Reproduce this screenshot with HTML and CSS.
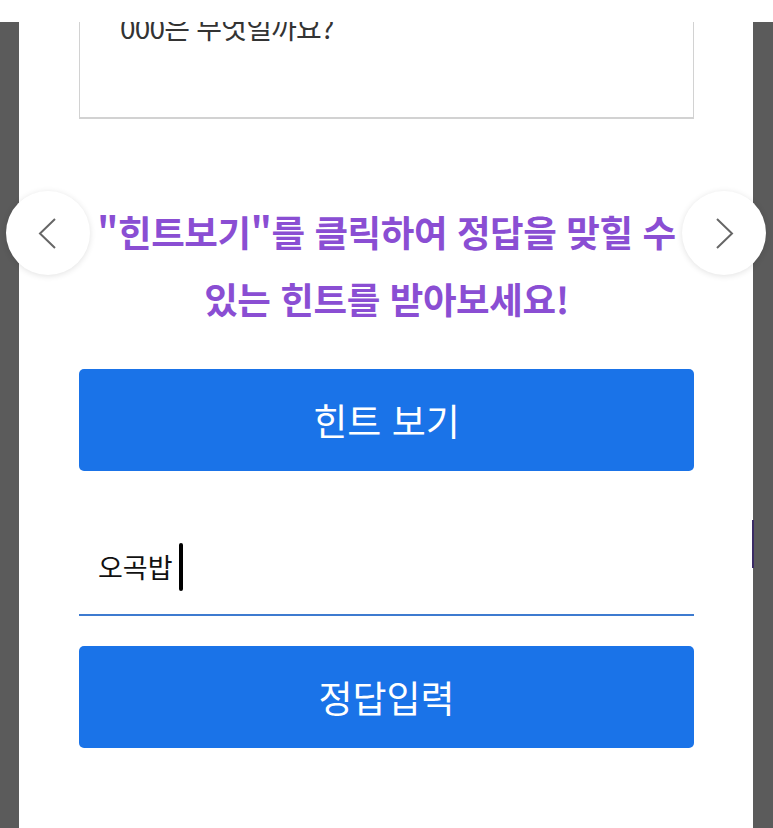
FILE: index.html
```html
<!DOCTYPE html>
<html lang="ko">
<head>
    <meta charset="UTF-8">
    <meta name="viewport" content="width=device-width, initial-scale=1.0">
    <title>퀴즈</title>
    <link rel="stylesheet" href="styles.css">
</head>
<body>
    <div class="top-strip"></div>
    <div class="side-mark"></div>

    <div class="panel">
        <div class="question">000은 무엇일까요?</div>

        <p class="hint-text">"힌트보기"를 클릭하여 정답을 맞힐 수<br>있는 힌트를 받아보세요!</p>

        <button class="blue-btn" id="hintBtn">힌트 보기</button>

        <div class="answer-field">
            <span class="answer-value">오곡밥</span><span class="caret"></span>
        </div>

        <button class="blue-btn" id="submitBtn">정답입력</button>
    </div>

    <button class="nav-arrow prev" aria-label="이전">
        <svg width="84" height="84" viewBox="0 0 84 84"><polyline points="49,28 34,42.5 49,57" /></svg>
    </button>
    <button class="nav-arrow next" aria-label="다음">
        <svg width="84" height="84" viewBox="0 0 84 84"><polyline points="35,28 50,42.5 35,57" /></svg>
    </button>
</body>
</html>
```

FILE: styles.css
```css
body {
    margin: 0;
    background-color: #5b5b5b;
    font-family: "Noto Sans CJK KR", "Noto Sans", sans-serif;
    overflow: hidden;
}
.top-strip {
    position: fixed;
    top: 0;
    left: 0;
    right: 0;
    height: 22px;
    background-color: #fff;
    z-index: 5;
}
.side-mark {
    position: fixed;
    left: 752px;
    top: 520px;
    width: 2px;
    height: 48px;
    background-color: #3b2c66;
    z-index: 2;
}
.panel {
    margin-left: 19px;
    width: 734px;
    min-height: 850px;
    background-color: #fff;
    padding: 0 59px 0 60px;
    box-sizing: border-box;
}
.question {
    margin-top: -10px;
    height: 129px;
    box-sizing: border-box;
    padding: 17px 40px 0;
    border: 1px solid #d2d2d2;
    border-bottom-width: 2px;
    font-size: 28px;
    line-height: 38px;
    color: #333;
    letter-spacing: -0.8px;
}
.hint-text {
    margin: 79px 0 0;
    text-align: center;
    font-size: 36.5px;
    font-weight: bold;
    line-height: 67px;
    color: #8a4ed3;
    letter-spacing: -0.4px;
}
.blue-btn {
    display: block;
    width: 100%;
    height: 102px;
    border: none;
    border-radius: 5px;
    background-color: #1a73e8;
    color: #fff;
    font-family: inherit;
    font-size: 37px;
    cursor: pointer;
}
#hintBtn {
    margin-top: 37px;
}
#submitBtn {
    margin-top: 30px;
}
.answer-field {
    margin-top: 48px;
    height: 97px;
    box-sizing: border-box;
    border-bottom: 2px solid #3d7bd0;
    padding-left: 19px;
    display: flex;
    align-items: center;
}
.answer-value {
    font-size: 27px;
    color: #111;
}
.caret {
    display: inline-block;
    width: 4px;
    height: 48px;
    margin-left: 6px;
    border-radius: 2px;
    background-color: #000;
}
.nav-arrow {
    position: fixed;
    top: 191px;
    width: 84px;
    height: 84px;
    padding: 0;
    border: none;
    border-radius: 50%;
    background-color: #fff;
    box-shadow: 0 1px 6px rgba(0, 0, 0, 0.12);
    z-index: 3;
}
.nav-arrow.prev {
    left: 6px;
}
.nav-arrow.next {
    left: 682px;
}
.nav-arrow svg {
    display: block;
}
.nav-arrow polyline {
    fill: none;
    stroke: #666;
    stroke-width: 2;
}
```
